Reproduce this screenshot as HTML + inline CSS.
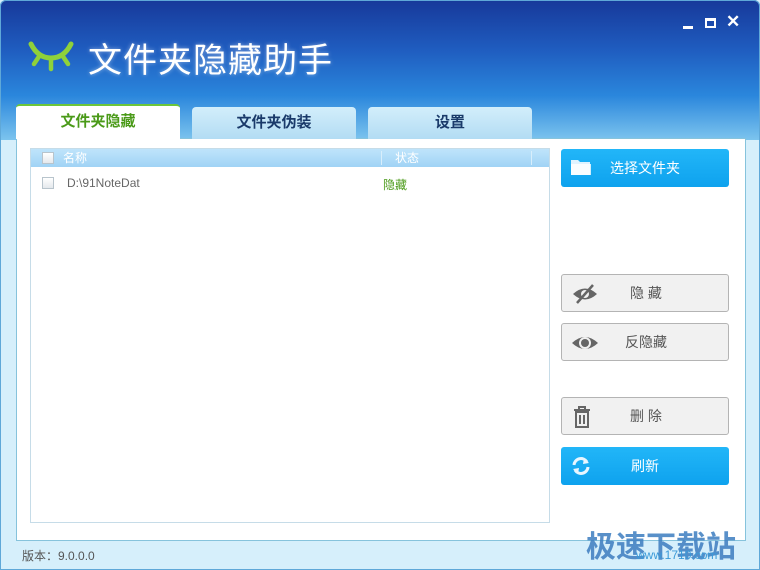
<!DOCTYPE html>
<html><head><meta charset="utf-8"><style>
*{margin:0;padding:0;box-sizing:border-box}
body{width:760px;height:570px;overflow:hidden;font-family:"Liberation Sans","Noto Sans CJK SC",sans-serif;background:#d6effb;position:relative}
.hdr{position:absolute;left:0;top:0;width:760px;height:140px;background:linear-gradient(180deg,#17399a 0%,#1f5cbf 35%,#2a86dc 68%,#7cc4ee 100%);border-radius:6px 6px 0 0}
.edge{position:absolute;left:0;top:0;width:760px;height:570px;border:1px solid #5fa8d8;border-radius:6px 6px 0 0;pointer-events:none}
.title{position:absolute;left:88px;top:33px;font-size:34px;color:#fff;letter-spacing:1px;font-weight:normal;text-shadow:0 0 4px rgba(255,255,255,.5)}
.tab{position:absolute;top:107px;width:164px;height:32px;border-radius:4px 4px 0 0;background:linear-gradient(#d2eefb,#b3dcf3);text-align:center;line-height:32px;font-size:15px;font-weight:bold;color:#1a3a6a}
.tab.on{top:104px;height:35px;background:#fff;border-top:2px solid #6cc63a;color:#4a9a18}
.panel{position:absolute;left:16px;top:138px;width:730px;height:403px;background:#fff;border:1px solid #86c3dc}
.list{position:absolute;left:30px;top:148px;width:520px;height:375px;border:1px solid #c6dce8;background:#fff}
.lh{position:absolute;left:0;top:0;width:518px;height:18px;background:linear-gradient(#bfe4fb,#a0d3f5);color:#fff;font-size:12px;line-height:18px}
.cb{position:absolute;width:12px;height:12px;border:1px solid #b8c4cc;background:linear-gradient(#fff,#e4e8ec)}
.btn{position:absolute;left:561px;width:168px;height:38px;border-radius:3px;font-size:14px;line-height:38px}
.blue{background:linear-gradient(#22b6f8,#0ea2ee);color:#fff}
.gray{background:#f1f1f1;border:1px solid #b4b4b4;color:#555;line-height:36px}
.btn span{position:absolute;left:0;width:168px;text-align:center}
.btn svg{position:absolute;left:9px;top:8px}
</style></head><body>
<div class="hdr"></div>
<svg style="position:absolute;left:28px;top:38px" width="46" height="34" viewBox="0 0 46 34"><path d="M3 6 Q10 20 23 20 Q36 20 43 6" fill="none" stroke="#8fd13a" stroke-width="5" stroke-linecap="round"/><path d="M23 20 V31 M12 17 L6 26 M34 17 L40 26" stroke="#8fd13a" stroke-width="4.5" stroke-linecap="round"/></svg>
<div class="title">文件夹隐藏助手</div>
<div style="position:absolute;left:683px;top:26px;width:10px;height:3px;background:#fff"></div>
<div style="position:absolute;left:705px;top:18px;width:11px;height:10px;border:2px solid #fff;border-top-width:3px"></div>
<div style="position:absolute;left:726px;top:12px;color:#fff;font-size:17px;font-weight:bold">✕</div>
<div class="panel"></div>
<div class="tab on" style="left:16px">文件夹隐藏</div>
<div class="tab" style="left:192px">文件夹伪装</div>
<div class="tab" style="left:368px">设置</div>
<div class="list">
<div class="lh"><div class="cb" style="left:11px;top:3px"></div><span style="position:absolute;left:32px">名称</span><span style="position:absolute;left:350px;top:2px;height:14px;border-left:1px solid #d8eefb"></span><span style="position:absolute;left:364px">状态</span><span style="position:absolute;left:500px;top:2px;height:14px;border-left:1px solid #d8eefb"></span></div>
<div class="cb" style="left:11px;top:28px"></div>
<div style="position:absolute;left:36px;top:27px;font-size:12px;color:#666">D:\91NoteDat</div>
<div style="position:absolute;left:352px;top:27px;font-size:12px;color:#4a9a18">隐藏</div>
</div>
<div class="btn blue" style="top:149px"><svg width="22" height="20" viewBox="0 0 22 20"><path d="M1 3 h7 l2 2 h10 v13 H1z" fill="#dff3ff"/><path d="M1 7 h20 v11 H1z" fill="#fff" opacity=".8"/></svg><span>选择文件夹</span></div>
<div class="btn gray" style="top:274px"><svg width="28" height="22" viewBox="0 0 28 22"><path d="M2 11 Q14 0 26 11 Q14 22 2 11z" fill="#666"/><circle cx="14" cy="11" r="4" fill="#f1f1f1"/><path d="M6 20 L22 2" stroke="#666" stroke-width="2.5"/></svg><span>隐 藏</span></div>
<div class="btn gray" style="top:323px"><svg width="28" height="22" viewBox="0 0 28 22"><path d="M1 11 Q14 -1 27 11 Q14 23 1 11z" fill="#666"/><circle cx="14" cy="11" r="6" fill="#f1f1f1"/><circle cx="14" cy="11" r="4" fill="#666"/></svg><span>反隐藏</span></div>
<div class="btn gray" style="top:397px"><svg width="22" height="22" viewBox="0 0 22 22"><path d="M3 4 h16 M8 4 V1 h6 v3 M5 6 h12 v15 H5z M9 9 v9 M13 9 v9" fill="none" stroke="#666" stroke-width="2"/></svg><span>删 除</span></div>
<div class="btn blue" style="top:447px"><svg width="22" height="22" viewBox="0 0 22 22"><path d="M4 10 A7 7 0 0 1 17 7 M18 12 A7 7 0 0 1 5 15" fill="none" stroke="#e8f6ff" stroke-width="3"/><path d="M14 3 L19 8 L13 9z M8 19 L3 14 L9 13z" fill="#e8f6ff"/></svg><span>刷新</span></div>
<div style="position:absolute;left:22px;top:547px;font-size:12px;color:#555">版本：9.0.0.0</div>
<div style="position:absolute;left:586px;top:522px;font-size:30px;font-weight:bold;color:#3d7dc0;opacity:.85">极速下载站</div>
<div style="position:absolute;left:636px;top:548px;font-size:12px;color:#3a9ad8">www.1710.com</div>
<div class="edge"></div>
</body></html>
